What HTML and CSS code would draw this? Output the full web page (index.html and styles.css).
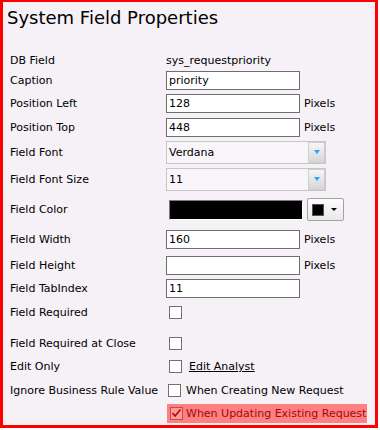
FILE: index.html
```html
<!DOCTYPE html>
<html>
<head>
  <meta charset="UTF-8">
  <title>System Field Properties</title>
  <link rel="stylesheet" href="styles.css">
</head>
<body>
  <div class="panel">
    <h1 class="title">System Field Properties</h1>

    <!-- field property grid -->
    <div class="props">
      <div class="lbl">DB Field</div>
      <div class="val">sys_requestpriority</div>

      <div class="lbl">Caption</div>
      <div class="val"><input class="txt" type="text" value="priority"></div>

      <div class="lbl">Position Left</div>
      <div class="val"><input class="txt" type="text" value="128"><span class="unit">Pixels</span></div>

      <div class="lbl">Position Top</div>
      <div class="val"><input class="txt" type="text" value="448"><span class="unit">Pixels</span></div>

      <div class="lbl">Field Font</div>
      <div class="val">
        <div class="combo"><span>Verdana</span><span class="combo-btn"><i class="tri"></i></span></div>
      </div>

      <div class="lbl">Field Font Size</div>
      <div class="val">
        <div class="combo"><span>11</span><span class="combo-btn"><i class="tri"></i></span></div>
      </div>

      <div class="lbl">Field Color</div>
      <div class="val">
        <div class="color-box"></div>
        <div class="color-btn"><span class="swatch"></span><i class="caret"></i></div>
      </div>

      <div class="lbl">Field Width</div>
      <div class="val"><input class="txt" type="text" value="160"><span class="unit">Pixels</span></div>

      <div class="lbl">Field Height</div>
      <div class="val"><input class="txt" type="text" value=""><span class="unit">Pixels</span></div>

      <div class="lbl">Field TabIndex</div>
      <div class="val"><input class="txt" type="text" value="11"></div>

      <div class="lbl">Field Required</div>
      <div class="val"><span class="chk"></span></div>

      <div class="lbl pad-top">Field Required at Close</div>
      <div class="val pad-top"><span class="chk"></span></div>

      <div class="lbl">Edit Only</div>
      <div class="val"><span class="chk"></span><a class="link">Edit Analyst</a></div>

      <div class="lbl">Ignore Business Rule Value</div>
      <div class="val"><span class="chk chk-tight"></span><span class="opt">When Creating New Request</span></div>

      <div class="lbl"></div>
      <div class="val">
        <div class="hl">
          <span class="chk chk-on">
            <svg width="11" height="11" viewBox="0 0 11 11"><polyline points="1.5,5 4,8 9.5,1.5" fill="none" stroke="#c00000" stroke-width="1.6"/></svg>
          </span>
          <span>When Updating Existing Request</span>
        </div>
      </div>
    </div>
  </div>
</body>
</html>
```

FILE: styles.css
```css
body {
  margin: 0;
  background: #fff;
  font-family: "DejaVu Sans", Verdana, sans-serif;
  font-size: 11px;
  color: #000;
}
.panel {
  width: 378px;
  height: 428px;
  box-sizing: border-box;
  border: 3px solid #f00;
  border-top-width: 2px;
  background: #f5f1f6;
  padding: 5px 0 0 4px;
}
.title {
  margin: 0 0 21px;
  font-size: 18px;
  font-weight: normal;
  line-height: 22px;
}
.props {
  display: grid;
  grid-template-columns: 156px 1fr;
  grid-template-rows: 20px 21px 24px 24px 26px 28px 33px 27px 24px 23px 24px 31px 23px 24px 22px;
  margin-left: 3px;
}
.lbl, .val {
  display: flex;
  align-items: center;
  white-space: nowrap;
}
.pad-top {
  padding-top: 7px;
}
.txt {
  width: 134px;
  height: 19px;
  box-sizing: border-box;
  margin: 0;
  padding: 0 2px;
  border: 1px solid #6e6e6e;
  background: #fff;
  font: inherit;
  color: #000;
  outline: none;
}
.unit {
  margin-left: 4px;
}
.combo {
  width: 160px;
  height: 23px;
  box-sizing: border-box;
  border: 1px solid #c6c6c6;
  background: #f7f5f8;
  display: flex;
  align-items: center;
  justify-content: space-between;
  padding-left: 2px;
}
.combo-btn {
  width: 17px;
  height: 21px;
  box-sizing: border-box;
  border: 1px solid #cfcfcf;
  background: linear-gradient(#f5f5f5, #d6d6d6);
  display: flex;
  align-items: center;
  justify-content: center;
}
.tri {
  width: 0;
  height: 0;
  border-left: 3px solid transparent;
  border-right: 3px solid transparent;
  border-top: 4px solid #1fa9ef;
}
.color-box {
  width: 134px;
  height: 20px;
  box-sizing: border-box;
  margin-left: 3px;
  background: #000;
  border: 1px solid;
  border-color: #7c7c7c #fff #fff #7c7c7c;
}
.color-btn {
  width: 37px;
  height: 23px;
  box-sizing: border-box;
  margin-left: 4px;
  border: 1px solid #a2a2a2;
  border-radius: 2px;
  background: linear-gradient(#fdfdfd, #e8e8e8);
  display: flex;
  align-items: center;
  padding-left: 4px;
}
.swatch {
  width: 12px;
  height: 12px;
  background: #000;
  border: 1px solid #555;
  box-sizing: border-box;
}
.caret {
  margin-left: 7px;
  width: 0;
  height: 0;
  border-left: 3px solid transparent;
  border-right: 3px solid transparent;
  border-top: 3px solid #000;
}
.chk {
  width: 13px;
  height: 13px;
  box-sizing: border-box;
  margin-left: 3px;
  border: 1px solid #707070;
  background: #fff;
}
.chk-tight {
  margin-left: 2px;
}
.link {
  margin-left: 7px;
  text-decoration: underline;
  color: #000;
}
.opt {
  margin-left: 5px;
}
.hl {
  margin-left: 1px;
  width: 200px;
  height: 19px;
  background: #ff8080;
  color: #9a0c0c;
  display: flex;
  align-items: center;
  gap: 3px;
  padding-left: 0;
}
.chk-on {
  margin-left: 3px;
  border-color: #b85050;
  background: #ff9a9a;
  display: flex;
  align-items: center;
  justify-content: center;
}
```
